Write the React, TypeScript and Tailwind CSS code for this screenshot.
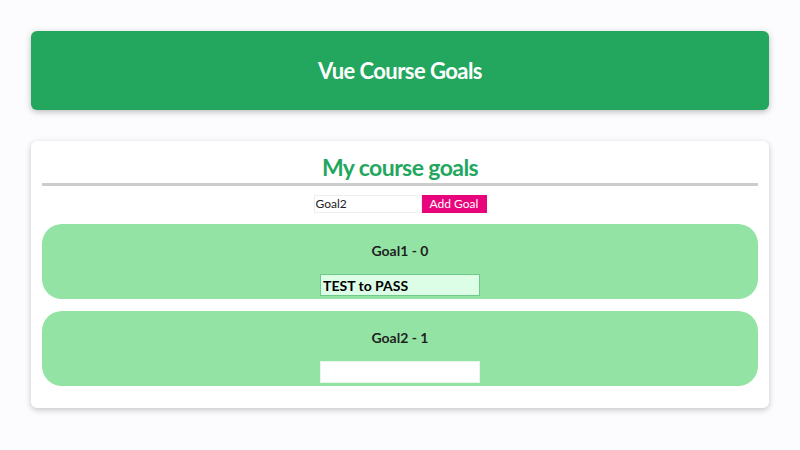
import React, { useState } from "react";

type Goal = { id: number; text: string; note: string };

const initialGoals: Goal[] = [
  { id: 0, text: "Goal1", note: "TEST to PASS" },
  { id: 1, text: "Goal2", note: "" },
];

const GoalItem = ({ goal, index, focused }: { goal: Goal; index: number; focused?: boolean }) => {
  const [note, setNote] = useState(goal.note);
  return (
    <li className="bg-[#93e4a4] rounded-[20px] h-[75px] flex flex-col items-center pt-[17px]">
      <h3 className="text-[14px] font-bold text-[#1f1f1f] leading-5">
        {goal.text} - {index}
      </h3>
      <input
        value={note}
        onChange={(e) => setNote(e.target.value)}
        className={`mt-[13px] w-[160px] h-[22px] px-[2px] text-[14px] font-bold text-black outline-none border ${
          focused ? "bg-[#dcfde6] border-[#6fc98a]" : "bg-white border-[#e6f7ea]"
        }`}
      />
    </li>
  );
};

export default function App() {
  const [draft, setDraft] = useState("Goal2");
  const [goals] = useState(initialGoals);

  return (
    <div className="min-h-[450px] bg-[#fcfbfd] pt-[31px] px-[31px] font-['Lato',sans-serif]">
      <header className="h-[79px] bg-[#23a75e] rounded-[6px] shadow-[0_2px_6px_rgba(0,0,0,0.25)] flex items-center justify-center">
        <h1 className="text-white text-[22px] font-bold tracking-tight">Vue Course Goals</h1>
      </header>

      <section className="mt-[31px] bg-white rounded-[6px] shadow-[0_2px_6px_rgba(0,0,0,0.22)] px-[11px] pt-[12px] pb-[22px]">
        <h2 className="text-center text-[#23a75e] text-[23px] font-bold leading-[28px] tracking-tight">
          My course goals
        </h2>
        <div className="mt-[2px] h-[3px] bg-[#cccccc]" />
        <div className="flex justify-center mt-[9px]">
          <input
            value={draft}
            onChange={(e) => setDraft(e.target.value)}
            className="w-[108px] h-[18px] border border-[#eeeeee] px-[1px] text-[12px] text-[#222] outline-none"
          />
          <button className="w-[65px] h-[18px] bg-[#e8057c] text-white text-[12px] leading-[18px]">
            Add Goal
          </button>
        </div>
        <ul className="mt-[11px] flex flex-col gap-[12px]">
          {goals.map((g, i) => (
            <GoalItem key={g.id} goal={g} index={i} focused={i === 0} />
          ))}
        </ul>
      </section>
    </div>
  );
}
